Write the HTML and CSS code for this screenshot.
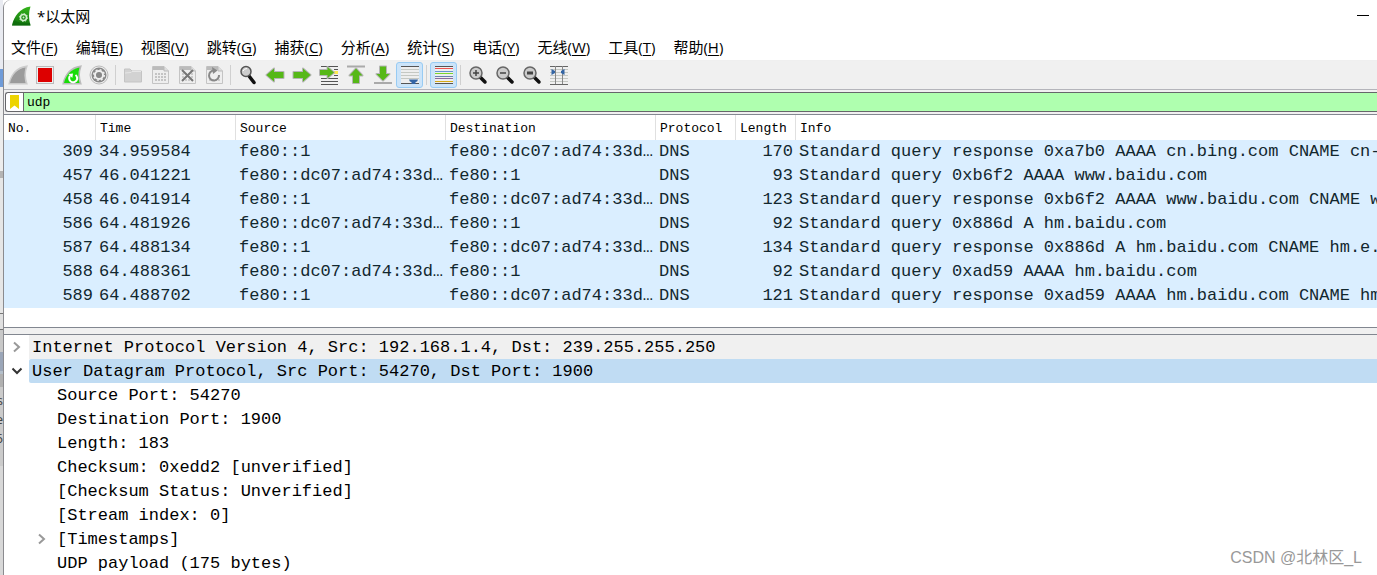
FILE: index.html
```html
<!DOCTYPE html>
<html lang="zh-CN">
<head>
<meta charset="utf-8">
<title>*以太网</title>
<link rel="stylesheet" href="styles.css">
</head>
<body>
<div class="desktop">
<aside class="behind" aria-hidden="true"><span>s</span><span>e</span><span>6</span></aside>
<main class="window">
  <header class="titlebar">
    <svg class="logo" width="22" height="22" viewBox="0 0 22 22"><defs><linearGradient id="fin" x2="0" y2="1"><stop offset="0" stop-color="#35b51c"/><stop offset="1" stop-color="#12730f"/></linearGradient></defs><path d="M1 20.500C3 11 9 3 19.500 1.500C17.500 7 17.500 14 19.500 20.500Z" fill="url(#fin)"/><path d="M1 20.500Q2 17 3 15Q10 19 19 18L19.500 20.500Z" fill="#0c650c" opacity=".6"/><circle cx="12.500" cy="12.500" r="3" fill="none" stroke="#d4efd0" stroke-width="1.500"/><circle cx="12.500" cy="12.500" r="4" fill="none" stroke="#d4efd0" stroke-width="1" stroke-dasharray="1.500 1.600"/><circle cx="12.500" cy="12.500" r="1" fill="#d4efd0"/></svg>
    <h1>*以太网</h1>
    <button class="minimize" aria-label="最小化"></button>
  </header>
  <nav class="menubar">
    <button>文件(<u>F</u>)</button><button>编辑(<u>E</u>)</button><button>视图(<u>V</u>)</button><button>跳转(<u>G</u>)</button><button>捕获(<u>C</u>)</button><button>分析(<u>A</u>)</button><button>统计(<u>S</u>)</button><button>电话(<u>Y</u>)</button><button>无线(<u>W</u>)</button><button>工具(<u>T</u>)</button><button>帮助(<u>H</u>)</button>
  </nav>
  <div class="toolbar" role="toolbar">
    <button aria-label="开始捕获"><svg viewBox="0 0 24 24"><path d="M3.500 20.500C5.500 12 10 5 20.500 3.500C18.500 9 18.500 15 20.500 20.500Z" fill="#999" stroke="#ccc" stroke-width="2"/><path d="M4 20C6 12 11 6 19.500 4.500C18 10 18 15 19.500 20Z" fill="#9b9b9b"/></svg></button>
    <button aria-label="停止捕获"><svg viewBox="0 0 24 24"><rect x="3.500" y="3.500" width="17" height="17" fill="#eee" stroke="#bbb"/><rect x="5" y="5" width="14" height="14" fill="#d00"/></svg></button>
    <button aria-label="重新开始捕获"><svg viewBox="0 0 24 24"><path d="M3.500 20.500C5.500 12 10 5 20.500 3.500C18.500 9 18.500 15 20.500 20.500Z" fill="#fff" stroke="#bbb" stroke-width="2"/><path d="M4 20C6 12 11 6 19.500 4.500C18 10 18 15 19.500 20Z" fill="#19dc08"/><path d="M15.500 12A4 4 0 1 1 10 12.800" fill="none" stroke="#fff" stroke-width="2"/><path d="M8.500 11L13 10.500L12.300 15Z" fill="#fff"/></svg></button>
    <button aria-label="捕获选项"><svg viewBox="0 0 24 24"><circle cx="12" cy="12" r="9" fill="#eee" stroke="#bbb"/><circle cx="12" cy="12" r="7.500" fill="#888"/><circle cx="12" cy="12" r="4" fill="none" stroke="#eee" stroke-width="2"/><circle cx="12" cy="12" r="5.300" fill="none" stroke="#eee" stroke-width="1.500" stroke-dasharray="2 2.160"/><circle cx="12" cy="12" r="2.500" fill="#888"/></svg></button>
    <hr>
    <button aria-label="打开"><svg viewBox="0 0 24 24"><path d="M3.500 19V6H9L11 8H20.500V19Z" fill="#d2d2d2" stroke="#c4c4c4"/><path d="M4 10L10 9.500L11 8.500H20" stroke="#e6e6e6" fill="none"/></svg></button>
    <button aria-label="保存"><svg viewBox="0 0 24 24"><path d="M4.500 3.500H16L20.500 8V20.500H4.500Z" fill="#eee" stroke="#c4c4c4"/><path d="M5 3.500H16V7H5Z" fill="#bbb"/><path d="M16 3.500V8H20.500" fill="#ddd" stroke="#bbb"/><path d="M7 11H18M7 14H18M7 17H18" stroke="#c4c4c4" stroke-width="2" stroke-dasharray="2 1"/></svg></button>
    <button aria-label="关闭"><svg viewBox="0 0 24 24"><path d="M4.500 3.500H16L20.500 8V20.500H4.500Z" fill="#eee" stroke="#c4c4c4"/><path d="M5 3.500H16V7H5Z" fill="#bbb"/><path d="M16 3.500V8H20.500" fill="#ddd" stroke="#bbb"/><path d="M7 11H18M7 14H18M7 17H18" stroke="#ccc" stroke-width="2" stroke-dasharray="2 1"/><path d="M7 7L18 18M18 7L7 18" stroke="#777" stroke-width="2"/></svg></button>
    <button aria-label="重新载入"><svg viewBox="0 0 24 24"><path d="M4.500 3.500H16L20.500 8V20.500H4.500Z" fill="#eee" stroke="#c4c4c4"/><path d="M5 3.500H16V7H5Z" fill="#bbb"/><path d="M16 3.500V8H20.500" fill="#ddd" stroke="#bbb"/><path d="M7 17H18" stroke="#ccc" stroke-width="2" stroke-dasharray="2 1"/><path d="M17 12A5 5 0 1 1 12 7.500" fill="none" stroke="#888" stroke-width="2"/><path d="M10 4L15.500 7.500L11 11Z" fill="#888"/></svg></button>
    <hr>
    <button aria-label="查找分组"><svg viewBox="0 0 24 24"><path d="M13 13L18 19.500" stroke="#111" stroke-width="3.500" stroke-linecap="round"/><circle cx="10" cy="8.500" r="5" fill="#ccc" stroke="#555" stroke-width="1.500"/><path d="M7 8Q8 5.500 11 5.500" fill="none" stroke="#fff"/></svg></button>
    <button aria-label="上一分组"><svg viewBox="0 0 24 24"><path class="arrow" d="M3.500 12L11 5.500V9H20.500V15H11V18.500Z"/></svg></button>
    <button aria-label="下一分组"><svg viewBox="0 0 24 24"><path class="arrow" d="M20.500 12L13 5.500V9H3.500V15H13V18.500Z"/></svg></button>
    <button aria-label="转到分组"><svg viewBox="0 0 24 24"><path d="M4 3.500H21M4 15.500H21M4 18.500H21M4 21.500H21M17 6.500H21M17 12.500H21" stroke="#555"/><path d="M16 9.500H21" stroke="#fce94f" stroke-width="3"/><path class="arrow" d="M17 9.500L10.500 4V7H3V12H10.500V15Z"/></svg></button>
    <button aria-label="首个分组"><svg viewBox="0 0 24 24"><path d="M3 3.500H21" stroke="#aaa" stroke-width="2"/><path class="arrow" d="M12 5.500L18.500 12.500H15V20H9V12.500H5.500Z"/></svg></button>
    <button aria-label="末个分组"><svg viewBox="0 0 24 24"><path d="M3 20H21" stroke="#aaa" stroke-width="2"/><path class="arrow" d="M12 17.500L18.500 11H15V3.500H9V11H5.500Z"/></svg></button>
    <button class="on" aria-label="自动滚动"><svg viewBox="0 0 24 24"><path fill="#eee" d="M3 3H21V21H3Z"/><path d="M3 6.500H21M3 9.500H21M3 12.500H21M3 15.500H21" stroke="#c5c8c3"/><path d="M3 3.500H21M3 20.500H21" stroke="#555"/><path d="M11 16.500H20Q19.500 19 17.500 19L17.500 21H13.500L13.500 19Q11.500 19 11 16.500Z" fill="#3465a4"/></svg></button>
    <hr>
    <button class="on" aria-label="着色"><svg viewBox="0 0 24 24"><path fill="#eee" d="M3 3H21V21H3Z"/><path d="M3 3.500H21M3 20.500H21" stroke="#555"/><path d="M3 5.500H21" stroke="#ef5350"/><path d="M3 8.500H21" stroke="#6795d0"/><path d="M3 10.500H21" stroke="#7bd72e"/><path d="M3 13.500H21" stroke="#6a83ad"/><path d="M3 15.500H21" stroke="#8b6b9e"/><path d="M3 18.500H21" stroke="#d5aa17"/></svg></button>
    <hr>
    <button aria-label="放大"><svg viewBox="0 0 24 24"><path d="M14 14L19 19" stroke="#111" stroke-width="3.500" stroke-linecap="round"/><circle cx="10" cy="10" r="6" fill="#ccc" stroke="#666" stroke-width="1.500"/><path d="M7 10H13M10 7V13" stroke="#444" stroke-width="1.500"/></svg></button>
    <button aria-label="缩小"><svg viewBox="0 0 24 24"><path d="M14 14L19 19" stroke="#111" stroke-width="3.500" stroke-linecap="round"/><circle cx="10" cy="10" r="6" fill="#ccc" stroke="#666" stroke-width="1.500"/><path d="M7 10H13" stroke="#444" stroke-width="1.500"/></svg></button>
    <button aria-label="普通大小"><svg viewBox="0 0 24 24"><path d="M14 14L19 19" stroke="#111" stroke-width="3.500" stroke-linecap="round"/><circle cx="10" cy="10" r="6" fill="#ccc" stroke="#666" stroke-width="1.500"/><path d="M7 10H13" stroke="#444" stroke-width="3"/></svg></button>
    <button aria-label="调整列宽"><svg viewBox="0 0 24 24"><path d="M3 6.500H21M3 9.500H21M3 12.500H21M3 15.500H21M3 18.500H21" stroke="#c5c8c3"/><path d="M3 3.500H21M3 21.500H21" stroke="#666"/><path d="M8.500 3V21M15.500 3V21" stroke="#888"/><path d="M4.500 6L8 8V10L4.500 12ZM17.500 6L14 8V10L17.500 12Z" fill="#3465a4"/></svg></button>
  </div>
  <form class="filter">
    <button type="button" aria-label="书签"><svg width="9" height="14" viewBox="0 0 9 14"><path d="M0 0H9V14L4.500 10.500L0 14Z" fill="#edd400"/></svg></button>
    <input type="text" value="udp" aria-label="显示过滤器" spellcheck="false">
  </form>
  <section class="packets">
    <table>
      <colgroup><col class="c-no"><col class="c-time"><col class="c-addr"><col class="c-addr"><col class="c-proto"><col class="c-len"><col></colgroup>
      <thead><tr><th>No.</th><th>Time</th><th>Source</th><th>Destination</th><th>Protocol</th><th>Length</th><th>Info</th></tr></thead>
      <tbody>
        <tr><td>309</td><td>34.959584</td><td>fe80::1</td><td>fe80::dc07:ad74:33d…</td><td>DNS</td><td>170</td><td>Standard query response 0xa7b0 AAAA cn.bing.com CNAME cn-b</td></tr>
        <tr><td>457</td><td>46.041221</td><td>fe80::dc07:ad74:33d…</td><td>fe80::1</td><td>DNS</td><td>93</td><td>Standard query 0xb6f2 AAAA www.baidu.com</td></tr>
        <tr><td>458</td><td>46.041914</td><td>fe80::1</td><td>fe80::dc07:ad74:33d…</td><td>DNS</td><td>123</td><td>Standard query response 0xb6f2 AAAA www.baidu.com CNAME ww</td></tr>
        <tr><td>586</td><td>64.481926</td><td>fe80::dc07:ad74:33d…</td><td>fe80::1</td><td>DNS</td><td>92</td><td>Standard query 0x886d A hm.baidu.com</td></tr>
        <tr><td>587</td><td>64.488134</td><td>fe80::1</td><td>fe80::dc07:ad74:33d…</td><td>DNS</td><td>134</td><td>Standard query response 0x886d A hm.baidu.com CNAME hm.e.s</td></tr>
        <tr><td>588</td><td>64.488361</td><td>fe80::dc07:ad74:33d…</td><td>fe80::1</td><td>DNS</td><td>92</td><td>Standard query 0xad59 AAAA hm.baidu.com</td></tr>
        <tr><td>589</td><td>64.488702</td><td>fe80::1</td><td>fe80::dc07:ad74:33d…</td><td>DNS</td><td>121</td><td>Standard query response 0xad59 AAAA hm.baidu.com CNAME hm.</td></tr>
      </tbody>
    </table>
  </section>
  <section class="details">
    <ul>
      <li><button aria-label="展开"><svg width="10" height="12" viewBox="0 0 10 12"><path d="M2 1.500L7 6L2 10.500" stroke="#999"/></svg></button><span class="root">Internet Protocol Version 4, Src: 192.168.1.4, Dst: 239.255.255.250</span></li>
      <li><button aria-label="折叠"><svg width="12" height="12" viewBox="0 0 12 12"><path d="M1.500 3.500L6 8L10.500 3.500" stroke="#333"/></svg></button><span class="root selected">User Datagram Protocol, Src Port: 54270, Dst Port: 1900</span></li>
      <li class="child"><span>Source Port: 54270</span></li>
      <li class="child"><span>Destination Port: 1900</span></li>
      <li class="child"><span>Length: 183</span></li>
      <li class="child"><span>Checksum: 0xedd2 [unverified]</span></li>
      <li class="child"><span>[Checksum Status: Unverified]</span></li>
      <li class="child"><span>[Stream index: 0]</span></li>
      <li class="child expandable"><button aria-label="展开"><svg width="10" height="12" viewBox="0 0 10 12"><path d="M2 1.500L7 6L2 10.500" stroke="#999"/></svg></button><span>[Timestamps]</span></li>
      <li class="child"><span>UDP payload (175 bytes)</span></li>
    </ul>
  </section>
</main>
<div class="watermark">CSDN @北林区_L</div>
</div>
</body>
</html>
```

FILE: styles.css
```css
* { box-sizing: border-box; }
body { margin: 0; overflow: hidden; background: #fff; color: #000; font-family: "Open Sans", "Noto Sans CJK SC", sans-serif; }
button { margin: 0; padding: 0; border: 0; background: none; color: inherit; font: inherit; }
.desktop { display: flex; height: 100vh; overflow: hidden; }

.behind {
  flex: 0 0 3px; overflow: hidden; padding-top: 391px;
  display: flex; flex-direction: column; align-items: flex-end;
  font-size: 13px; line-height: 19px; color: #444;
  background: linear-gradient(#e9ebf1 0 69px, #6f9bd8 69px 87px, #ededed 87px 171px, #b4b4b4 171px 178px, #e6e6e6 178px 313px, #777 313px 314px, #e0e0e0 314px 329px, #777 329px 330px, #c8c8c8 330px 352px, #9ba6b8 352px 371px, #b4bfca 371px 374px, #b0b0b0 374px 387px, #cbcbcb 387px 466px, #d8d8d8 466px);
}

.window { flex: 1; min-width: 0; display: flex; flex-direction: column; border-left: 1px solid #8b8b8f; border-top-left-radius: 8px; background: #f0f0f0; }
.titlebar { flex: none; display: flex; align-items: center; height: 31px; padding: 0 7px; gap: 4px; background: #fff; border-top-left-radius: 8px; }
.titlebar h1 { margin: 0; flex: 1; font-size: 15px; line-height: 20px; font-weight: 400; }
.logo { flex: none; }
.minimize { width: 14px; height: 20px; background: linear-gradient(#000, #000) center / 12px 1px no-repeat; }

.menubar { flex: none; display: flex; gap: 18px; height: 30px; padding: 0 7px; background: #fff; border-bottom: 1px solid #efefef; }
.menubar button { font-size: 15px; line-height: 32px; white-space: nowrap; }
.menubar u { text-underline-offset: 2px; text-decoration-thickness: 1px; }

.toolbar { flex: none; display: flex; align-items: center; height: 29px; border-bottom: 1px solid #b5b5bb; }
.toolbar button { flex: none; display: flex; align-items: center; justify-content: center; width: 27px; height: 26px; }
.toolbar svg { flex: none; width: 24px; height: 24px; }
.toolbar .on { background: #cce4f9; border: 1px solid #98cbf3; border-radius: 3px; }
.toolbar hr { flex: none; width: 1px; height: 20px; margin: 0 3px; border: 0; background: #d0d0d0; }
.arrow { fill: #56b817; stroke: #b5b5b5; stroke-width: 2px; paint-order: stroke; stroke-linejoin: round; }

.filter { flex: none; display: flex; height: 20px; margin: 2px 0 2px 1px; border: 1px solid #66666a; border-right: 0; border-radius: 3px 0 0 3px; background: #fff; }
.filter button { flex: none; display: flex; align-items: center; justify-content: center; width: 18px; border-right: 1px solid #66666a; }
.filter input { flex: 1; min-width: 0; margin: 0; padding: 0 3px; border: 0; outline: 0; border-radius: 0; background: #afffaf; color: #000; font: 13px "Liberation Mono", monospace; }

.packets { flex: none; padding-bottom: 19px; overflow: hidden; background: #fff; border: solid #828790; border-width: 1px 0; }
table { width: 100%; table-layout: fixed; border-collapse: separate; border-spacing: 0; }
.c-no { width: 92px; }
.c-time { width: 140px; }
.c-addr { width: 210px; }
.c-proto { width: 80px; }
.c-len { width: 60px; }
th { height: 25px; padding: 2px 4px 0; border-right: 1px solid #e0e0e0; text-align: left; font: 13px "Liberation Mono", monospace; white-space: nowrap; }
th:last-child { border-right: 0; }
tbody { background: #daeeff; color: #12272e; }
td { height: 24px; padding: 0 3px; overflow: hidden; white-space: nowrap; font: 17px/24px "Liberation Mono", monospace; }
td:nth-child(1), td:nth-child(6) { text-align: right; }

.details { flex: 1; margin-top: 6px; overflow: hidden; background: #fff; border-top: 1px solid #828790; }
ul { margin: 0; padding: 0; list-style: none; font: 17px/26px "Liberation Mono", monospace; }
li { display: flex; height: 24px; white-space: nowrap; }
li button { flex: none; display: flex; align-items: center; justify-content: center; width: 25px; }
li path { fill: none; stroke-width: 2px; }
.root { flex: 1; padding-left: 3px; background: #f0f0f0; }
.selected { background: #c0dcf3; border-radius: 2px 0 0 2px; }
.child { padding-left: 53px; }
.expandable { padding-left: 25px; }
.expandable span { padding-left: 3px; }

.watermark { position: absolute; right: 15px; bottom: 5px; font-family: "Liberation Sans", "Noto Sans CJK SC", sans-serif; font-size: 16px; line-height: 24px; color: #999; }
```
